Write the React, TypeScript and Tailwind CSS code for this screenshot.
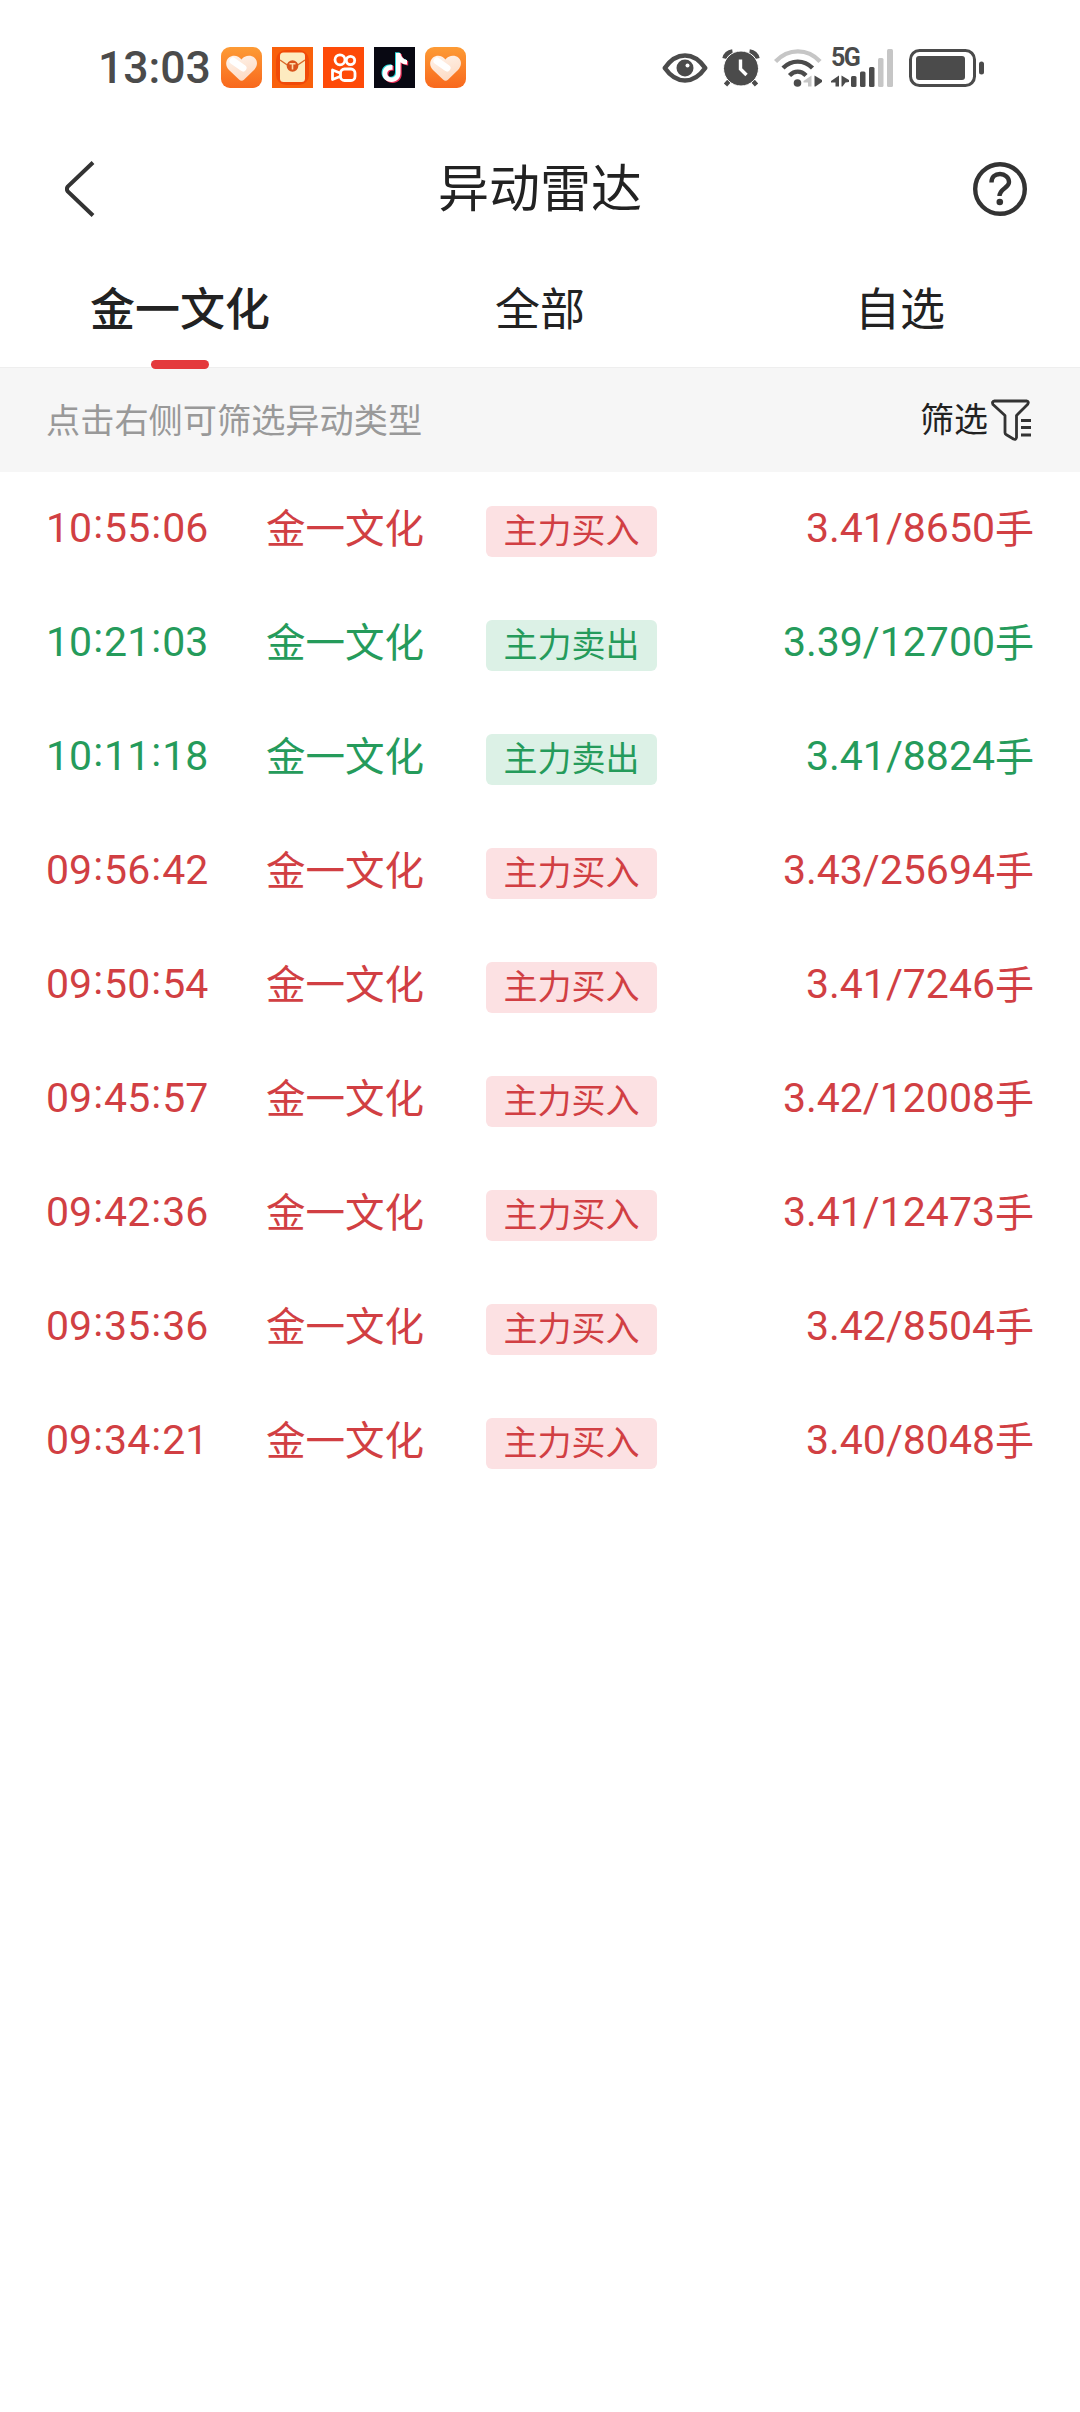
type Side = "buy" | "sell";

interface Signal {
  time: string;
  name: string;
  side: Side;
  price: string;
  volume: number;
}

const signals: Signal[] = [
  { time: "10:55:06", name: "金一文化", side: "buy", price: "3.41", volume: 8650 },
  { time: "10:21:03", name: "金一文化", side: "sell", price: "3.39", volume: 12700 },
  { time: "10:11:18", name: "金一文化", side: "sell", price: "3.41", volume: 8824 },
  { time: "09:56:42", name: "金一文化", side: "buy", price: "3.43", volume: 25694 },
  { time: "09:50:54", name: "金一文化", side: "buy", price: "3.41", volume: 7246 },
  { time: "09:45:57", name: "金一文化", side: "buy", price: "3.42", volume: 12008 },
  { time: "09:42:36", name: "金一文化", side: "buy", price: "3.41", volume: 12473 },
  { time: "09:35:36", name: "金一文化", side: "buy", price: "3.42", volume: 8504 },
  { time: "09:34:21", name: "金一文化", side: "buy", price: "3.40", volume: 8048 },
];

const tabs = ["金一文化", "全部", "自选"];

function HeartApp({ id }: { id: string }) {
  return (
    <svg viewBox="0 0 41 41" className="size-[41px]">
      <defs>
        <linearGradient id={`${id}-bg`} x1="0" y1="0" x2="0" y2="1">
          <stop offset="0" stopColor="#fd9b35" />
          <stop offset="1" stopColor="#f8681d" />
        </linearGradient>
        <linearGradient id={`${id}-heart`} x1="0" y1="0" x2="0.4" y2="1">
          <stop offset="0" stopColor="#fff3ea" />
          <stop offset="1" stopColor="#fddcc6" />
        </linearGradient>
      </defs>
      <rect width="41" height="41" rx="9" fill={`url(#${id}-bg)`} />
      <path
        d="M20.500 12.500C17.500 8.500 12 7.500 8 10.500C4 14 4.500 19.500 8 23L18 32.500C19.800 34.300 21.500 34.300 23.200 32.500L33 23C36.800 19 37 14 33.500 10.800C29.500 7.500 23.500 8.500 20.500 12.500Z"
        fill={`url(#${id}-heart)`}
      />
      <path d="M12 14L22 21" stroke="#fff" strokeWidth="7" strokeLinecap="round" />
    </svg>
  );
}

function EnvelopeApp() {
  return (
    <svg viewBox="0 0 41 41" className="size-[41px]">
      <rect width="41" height="41" fill="#f9600b" />
      <rect x="4" y="3" width="33" height="35" rx="10" fill="#f04a08" />
      <rect x="8" y="5.500" width="25" height="29.500" rx="3.500" fill="#fdebc0" />
      <path d="M8 13L16 18.500M33 13L25 18.500" stroke="#d9692a" strokeWidth="1.500" />
      <circle cx="20.500" cy="19" r="5.800" fill="#d8541c" />
      <path d="M17.500 16.800H23.500M20.500 16.800V22.500" stroke="#fdd9a8" strokeWidth="1.600" />
    </svg>
  );
}

function KuaishouApp() {
  return (
    <svg viewBox="0 0 41 41" className="size-[41px]" fill="none" stroke="#fff" strokeWidth="2.800">
      <rect width="41" height="41" fill="#fe4a08" stroke="none" />
      <circle cx="17" cy="12.800" r="5" />
      <circle cx="27.500" cy="13.500" r="4.200" />
      <rect x="17.500" y="22" width="14.500" height="11.500" rx="4" />
      <path d="M17 26L9.500 23V32.500L17 29.500" strokeLinejoin="round" />
    </svg>
  );
}

function DouyinApp() {
  const note =
    "M22 6H26.500C27 10 29.500 12.500 33 13V17.500C30.500 17.500 28.500 16.700 26.500 15.300V26C26.500 31.500 22.500 35 17.500 35C12 35 8.500 31 8.500 26.500C8.500 21 13 17.500 18.500 18V22.800C15.500 22.200 13.200 24 13.200 26.500C13.200 28.800 15 30.500 17.500 30.500C20 30.500 22 28.800 22 26Z";
  return (
    <svg viewBox="0 0 41 41" className="size-[41px]">
      <rect width="41" height="41" fill="#080812" />
      <path d={note} fill="#2bd9dc" transform="translate(-1 -0.700)" />
      <path d={note} fill="#f0325c" transform="translate(1.200 0.900)" />
      <path d={note} fill="#fff" />
    </svg>
  );
}

function EyeIcon() {
  return (
    <svg viewBox="0 0 46 32" className="h-8 w-[46px]">
      <path
        d="M2.800 16C8 8.500 14.500 3.500 23 3.500S38 8.500 43.200 16C38 23.500 31.500 28.500 23 28.500S8 23.500 2.800 16Z"
        fill="none"
        stroke="#4b4b4b"
        strokeWidth="4.600"
        strokeLinejoin="round"
      />
      <circle cx="23" cy="16" r="8.500" fill="#4b4b4b" />
      <circle cx="25.500" cy="13.500" r="2" fill="#fff" />
    </svg>
  );
}

function AlarmIcon() {
  return (
    <svg viewBox="0 0 38 38" className="size-[38px]" fill="none" stroke="#4b4b4b">
      <path d="M2.500 9.500Q4 3.500 10.500 2.500M35.500 9.500Q34 3.500 27.500 2.500" strokeWidth="4.500" />
      <path d="M8 31L3.500 36M30 31L34.500 36" strokeWidth="4.500" />
      <circle cx="19" cy="19.500" r="17.500" fill="#4b4b4b" stroke="#fff" strokeWidth="1" />
      <path d="M18.500 10.500V20L24.500 26" stroke="#fff" strokeWidth="3.400" />
    </svg>
  );
}

function WifiIcon() {
  return (
    <svg viewBox="0 0 48 38" className="h-[38px] w-12" fill="none" stroke="#4b4b4b" strokeWidth="4.400">
      <path d="M1.500 12.500C14.500 -1 33.500 -1 46 12.500" stroke="#c6c6c6" />
      <path d="M9 19C17.500 10.500 30 10.500 38.500 19" />
      <path d="M15.500 26.500C20.500 21.500 27 21.500 32 26.500" />
      <circle cx="23.500" cy="34" r="3.800" fill="#4b4b4b" stroke="none" />
      <path d="M37.500 26.500V37.500H34V33.500H29.500V32Z" fill="#c6c6c6" stroke="none" />
      <path d="M40.500 26.500L48 31V33L41.500 37.500H40.500Z" fill="#4b4b4b" stroke="none" />
    </svg>
  );
}

function SignalIcon() {
  return (
    <div className="relative h-[38px] w-[63px]">
      <span className="absolute -top-[5px] left-0 font-[Roboto] text-[25px] leading-7 font-bold tracking-[-1.500px]">
        5G
      </span>
      <svg viewBox="0 0 63 38" className="size-full" fill="#4b4b4b">
        <path d="M8 26.500V37.500H4.500V33.500H0V32Z" />
        <path d="M10.500 26.500L18 31V33L14.500 33.500L11.500 37.500H10.500Z" />
        <rect x="20" y="27" width="5.500" height="11" rx="1.500" />
        <rect x="29" y="22.500" width="5.500" height="15.500" rx="1.500" />
        <rect x="38" y="18" width="5.500" height="20" rx="1.500" />
        <rect x="47" y="9" width="5.500" height="29" rx="1.500" fill="#c6c6c6" />
        <rect x="56" y="0" width="6" height="38" rx="1.500" fill="#c6c6c6" />
      </svg>
    </div>
  );
}

function BatteryIcon() {
  return (
    <svg viewBox="0 0 76 38" className="h-[38px] w-[76px]">
      <rect x="1.500" y="1.500" width="64" height="35" rx="9" fill="none" stroke="#4b4b4b" strokeWidth="3" />
      <rect x="7" y="7" width="49" height="24" rx="3" fill="#4b4b4b" />
      <rect x="70" y="12.500" width="5" height="13" rx="2.500" fill="#4b4b4b" />
    </svg>
  );
}

function StatusBar() {
  return (
    <div className="flex h-[136px] items-center justify-between pr-[95px] pb-0.5 pl-[98px] text-[#4b4b4b]">
      <div className="flex items-center gap-2.5">
        <span className="w-[113px] pt-0.5 font-[Roboto] text-[44.500px] leading-none font-medium">13:03</span>
        <HeartApp id="first" />
        <EnvelopeApp />
        <KuaishouApp />
        <DouyinApp />
        <HeartApp id="last" />
      </div>
      <div className="flex items-center pt-px">
        <EyeIcon />
        <div className="ml-3.5">
          <AlarmIcon />
        </div>
        <div className="ml-3.5">
          <WifiIcon />
        </div>
        <div className="ml-[9px]">
          <SignalIcon />
        </div>
        <div className="ml-[15px]">
          <BatteryIcon />
        </div>
      </div>
    </div>
  );
}

function Header() {
  return (
    <header className="flex h-[106px] items-center justify-between px-[53px] text-[#222]">
      <button type="button" className="flex w-[100px] pl-3">
        <svg viewBox="0 0 30 56" className="h-14 w-[30px]" fill="none" stroke="#333" strokeWidth="4">
          <path d="M28 1.500L2.800 25.500Q1 28 2.800 30.500L28 54.500" />
        </svg>
      </button>
      <h1 className="pb-[7px] text-[51px] leading-none">异动雷达</h1>
      <button type="button" className="flex w-[100px] justify-end">
        <svg viewBox="0 0 54 54" className="size-[54px]" fill="none" stroke="#333" strokeWidth="4.400">
          <circle cx="27" cy="27" r="24.800" />
          <path d="M18.500 20.500C18.500 15 22 12 27 12S36 15.500 36 20C36 26 26.500 26.500 26.500 34" />
          <circle cx="26.800" cy="40" r="3.300" fill="#333" stroke="none" />
        </svg>
      </button>
    </header>
  );
}

function Tabs() {
  return (
    <nav className="grid h-[126px] grid-cols-3 border-b border-[#eee] text-[45px] text-[#222]">
      {tabs.map((tab, i) => (
        <div key={tab} className="relative flex justify-center pt-8 leading-[66px]">
          <span className={i === 0 ? "font-medium" : ""}>{tab}</span>
          {i === 0 && <i className="absolute -bottom-0.5 h-[9px] w-[58px] rounded-full bg-[#e4393c]" />}
        </div>
      ))}
    </nav>
  );
}

function FilterBar() {
  return (
    <div className="flex h-26 items-center justify-between bg-[#f6f6f6] pr-12 pl-[46px] text-[34px] leading-none">
      <span className="pb-1 text-[34.200px] text-[#999]">点击右侧可筛选异动类型</span>
      <button type="button" className="flex items-center gap-[3px] text-[#222]">
        <span className="pb-1">筛选</span>
        <svg viewBox="0 0 41 42" className="h-[42px] w-[41px]" fill="none" stroke="#333" strokeWidth="2.800">
          <path
            d="M3.500 2H35.500Q38.500 2.500 36.500 5.500L25.500 16.500V38.500Q25 41 22.500 40L15 35.500Q14 35 14 33.500V16.500L2 5.500Q0.500 2.500 3.500 2Z"
            strokeLinejoin="round"
          />
          <path d="M30 21.500H40M30 28.500H40M30 36H40" />
        </svg>
      </button>
    </div>
  );
}

function Time({ value }: { value: string }) {
  return (
    <span className="flex w-[220px] pb-0.5 font-[Roboto] text-[41px]">
      {value.split(":").map((part, i) => (
        <span key={i} className="flex">
          {i > 0 && <span className="w-3 -translate-y-1 text-center">:</span>}
          {part}
        </span>
      ))}
    </span>
  );
}

function SignalRow({ signal }: { signal: Signal }) {
  const buy = signal.side === "buy";
  return (
    <li className={`flex h-[114px] items-center pr-[46px] pl-[46px] leading-[60px] ${buy ? "text-[#d13f43]" : "text-[#259b5b]"}`}>
      <Time value={signal.time} />
      <span className="w-[220px] pb-[7px] text-[39.500px]">{signal.name}</span>
      <span
        className={`mt-1 flex h-[51px] w-[171px] justify-center rounded-md text-[34px] leading-[46px] ${buy ? "bg-[#fce1e3]" : "bg-[#dcf1e6]"}`}
      >
        {buy ? "主力买入" : "主力卖出"}
      </span>
      <span className="flex flex-1 items-center justify-end font-[Roboto] text-[41px]">
        <span className="pb-0.5">
          {signal.price}/{signal.volume}
        </span>
        <span className="pb-[7px] font-['Noto_Sans_CJK_SC'] text-[39px]">手</span>
      </span>
    </li>
  );
}

export default function App() {
  return (
    <div className="min-h-[2412px] w-[1080px] bg-white font-['Noto_Sans_CJK_SC',sans-serif]">
      <StatusBar />
      <Header />
      <Tabs />
      <FilterBar />
      <ul>
        {signals.map((signal) => (
          <SignalRow key={signal.time} signal={signal} />
        ))}
      </ul>
    </div>
  );
}
